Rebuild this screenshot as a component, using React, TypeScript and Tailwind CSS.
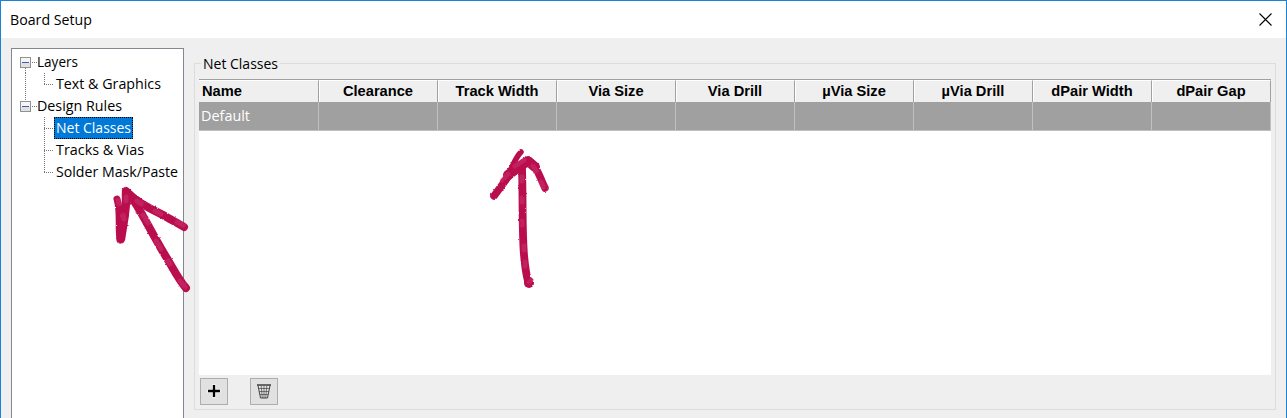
import React from "react";

const columns = [
  "Clearance",
  "Track Width",
  "Via Size",
  "Via Drill",
  "µVia Size",
  "µVia Drill",
  "dPair Width",
  "dPair Gap",
];

function Label({ text, width, color = "#000" }: { text: string; width: number; color?: string }) {
  return (
    <svg width={width} height="22" className="block shrink-0 overflow-visible">
      <text
        x="0"
        y="16"
        textLength={width}
        lengthAdjust="spacingAndGlyphs"
        fill={color}
        className="font-['Open_Sans','Noto_Sans',sans-serif] text-[15.3px]"
      >
        {text}
      </text>
    </svg>
  );
}

function Group({ text, width, first }: { text: string; width: number; first?: boolean }) {
  return (
    <div className="flex h-[22px]">
      <svg width="17" height="22" className="block shrink-0" shapeRendering="crispEdges">
        {first ? (
          <path d="M5.5 17V22" stroke="#777" strokeDasharray="1 1" />
        ) : (
          <path d="M5.5 0V6" stroke="#777" strokeDasharray="1 1" />
        )}
        <path d="M12 11.5H17" stroke="#777" strokeDasharray="1 1" />
        <rect x="0.5" y="6.5" width="10" height="10" fill="#f6f6f6" stroke="#919191" />
        <rect x="1" y="12" width="9" height="4" fill="#e1e1e1" />
        <rect x="2" y="11" width="7" height="1" fill="#3f5cab" />
      </svg>
      <Label text={text} width={width} />
    </div>
  );
}

function Leaf({
  text,
  width,
  trunk,
  last,
  selected,
}: {
  text: string;
  width: number;
  trunk?: boolean;
  last?: boolean;
  selected?: boolean;
}) {
  return (
    <div className="flex h-[22px]">
      <svg width="34" height="22" className="block shrink-0" shapeRendering="crispEdges">
        {trunk && <path d="M5.5 0V22" stroke="#777" strokeDasharray="1 1" />}
        <path d={last ? "M24.5 0V11" : "M24.5 0V22"} stroke="#777" strokeDasharray="1 1" />
        <path d="M24 11.5H33" stroke="#777" strokeDasharray="1 1" />
      </svg>
      {selected ? (
        <div className="h-[22px] w-[79px] border border-dotted border-[#e28a35] bg-[#0078d7] pl-px outline-1 -outline-offset-1 outline-dotted outline-black">
          <div className="-mt-px">
            <Label text={text} width={width} color="#fff" />
          </div>
        </div>
      ) : (
        <div className="pl-[2px]">
          <Label text={text} width={width} />
        </div>
      )}
    </div>
  );
}

function Arrows() {
  return (
    <svg width="1287" height="418" className="pointer-events-none absolute top-0 left-0" fill="none">
      <defs>
        <filter id="rough" x="0" y="0" width="1287" height="418" filterUnits="userSpaceOnUse">
          <feTurbulence type="fractalNoise" baseFrequency="0.4" numOctaves="1" seed="4" result="n" />
          <feDisplacementMap in="SourceGraphic" in2="n" scale="2.4" xChannelSelector="R" yChannelSelector="G" />
        </filter>
      </defs>
      <g filter="url(#rough)" strokeLinecap="round" strokeLinejoin="round">
        <g stroke="#b90c4d" strokeWidth="8">
          <path d="M134 201C145 218 156 241 168 260C174 270 179 280 186 288" />
          <path d="M126 191C136 202 150 209 163 215C171 220 178 223 184 227" />
          <path d="M126 193C127 209 123 224 121 239" strokeWidth="8.5" />
          <path d="M117 199C121 212 118 225 120 240" strokeWidth="7" />
          <path d="M129 195L138 203" strokeWidth="9" />
          <path d="M522 168C523 200 522 230 524 255C525 266 526 274 528 281" strokeWidth="7.8" />
          <path d="M529 282V283" strokeWidth="10" />
          <path d="M494 196L508 177L522 164L528 161C537 165 540 178 545 188" strokeWidth="7.5" />
          <path d="M503 181C511 174 513 160 521 152" strokeWidth="5.5" />
          <path d="M508 175L520 166L528 161L535 167" strokeWidth="10" />
        </g>
        <g stroke="#e0719a" strokeWidth="5" opacity="0.22">
          <path d="M143 215L148 223M156 241L161 249M168 261L170 264M180 281L185 287" />
          <path d="M137 201L142 204M155 211L161 214M177 222L183 225" />
          <path d="M126 197V201M123 215L124 219M118 200L119 204" />
          <path d="M522 177V181M522 198V202M522 221V225M524 246V250M525 262V266M529 282L531 280" />
          <path d="M515 166L524 160M533 166L536 171M502 180L508 174M541 182L543 187" />
        </g>
      </g>
    </svg>
  );
}

export default function App() {
  return (
    <div className="relative flex h-[418px] w-[1287px] flex-col overflow-hidden border-t border-r border-l border-[#1883d7] bg-[#efefef]">
      <header className="flex h-[37px] shrink-0 items-start justify-between bg-white pr-[14px] pl-[9px]">
        <div className="pt-[8px]">
          <Label text="Board Setup" width={82} />
        </div>
        <svg width="13" height="13" className="mt-[12px] block" stroke="#000" strokeWidth="1.1">
          <path d="M0.5 0.5L12.5 12.5M12.5 0.5L0.5 12.5" />
        </svg>
      </header>
      <div className="flex flex-1 pl-[10px]">
        <nav className="mt-[10px] h-[380px] w-[173px] shrink-0 border border-[#828790] bg-white pt-[2px] pl-[8px]">
          <Group text="Layers" width={41} first />
          <Leaf text="Text & Graphics" width={105} trunk last />
          <Group text="Design Rules" width={85} />
          <Leaf text="Net Classes" width={75} selected />
          <Leaf text="Tracks & Vias" width={88} />
          <Leaf text="Solder Mask/Paste" width={122} last />
        </nav>
        <fieldset className="mt-[14px] ml-[10px] h-[358px] w-[1082px] shrink-0 border border-[#dcdcdc] pl-[4px]">
          <legend className="ml-[2px] h-[22px] px-[2px]">
            <div className="pt-px">
              <Label text="Net Classes" width={75} />
            </div>
          </legend>
          <div className="mt-[5px] h-[296px] w-[1072px] bg-white">
            <div className="flex h-[23px] border-t border-[#a0a0a0] bg-[#efefef] font-['Liberation_Sans',Arial,sans-serif] text-[14.67px] leading-[22px] font-bold">
              <div className="w-[120px] border-t border-r border-t-white border-r-[#a0a0a0] pl-[3px] leading-[20px]">Name</div>
              {columns.map((c) => (
                <div key={c} className="w-[119px] border-t border-r border-t-white border-r-[#a0a0a0] text-center leading-[20px] whitespace-nowrap shadow-[inset_1px_0_0_#fff]">
                  {c}
                </div>
              ))}
            </div>
            <div className="flex h-[29px] border-b border-[#c0c0c0] bg-[#a0a0a0]">
              <div className="w-[120px] border-r border-[#c0c0c0] pt-[3px] pl-[2px]">
                <Label text="Default" width={49} color="#fff" />
              </div>
              {columns.map((c) => (
                <div key={c} className="w-[119px] border-r border-[#c0c0c0]" />
              ))}
            </div>
          </div>
          <div className="mt-[3px] flex gap-[22px] pl-px">
            <button aria-label="Add" className="flex h-[27px] w-[28px] items-center justify-center border border-[#adadad] bg-[#e1e1e1]">
              <svg width="14" height="15" className="block" fill="none">
                <path d="M7 0V14M0 7H14" stroke="#fff" strokeOpacity="0.5" strokeWidth="4" />
                <path d="M7 1V13M1 7H13" stroke="#000" strokeWidth="2.3" />
              </svg>
            </button>
            <button aria-label="Delete" className="flex h-[27px] w-[28px] items-center justify-center border border-[#adadad] bg-[#e1e1e1]">
              <svg width="14" height="15" className="block" fill="none" stroke="#333">
                <path d="M0 1H14" strokeWidth="1.4" />
                <path d="M1 1.5L3.5 14H10.5L13 1.5" strokeWidth="0.9" />
                <path d="M4.2 2L5.3 14M7 2V14M9.8 2L8.7 14M1.5 4.5H12.5M2.2 7.5H11.8M2.8 10.5H11.2" strokeWidth="0.6" />
              </svg>
            </button>
          </div>
        </fieldset>
      </div>
      <div className="absolute -top-px -left-px">
        <Arrows />
      </div>
    </div>
  );
}
